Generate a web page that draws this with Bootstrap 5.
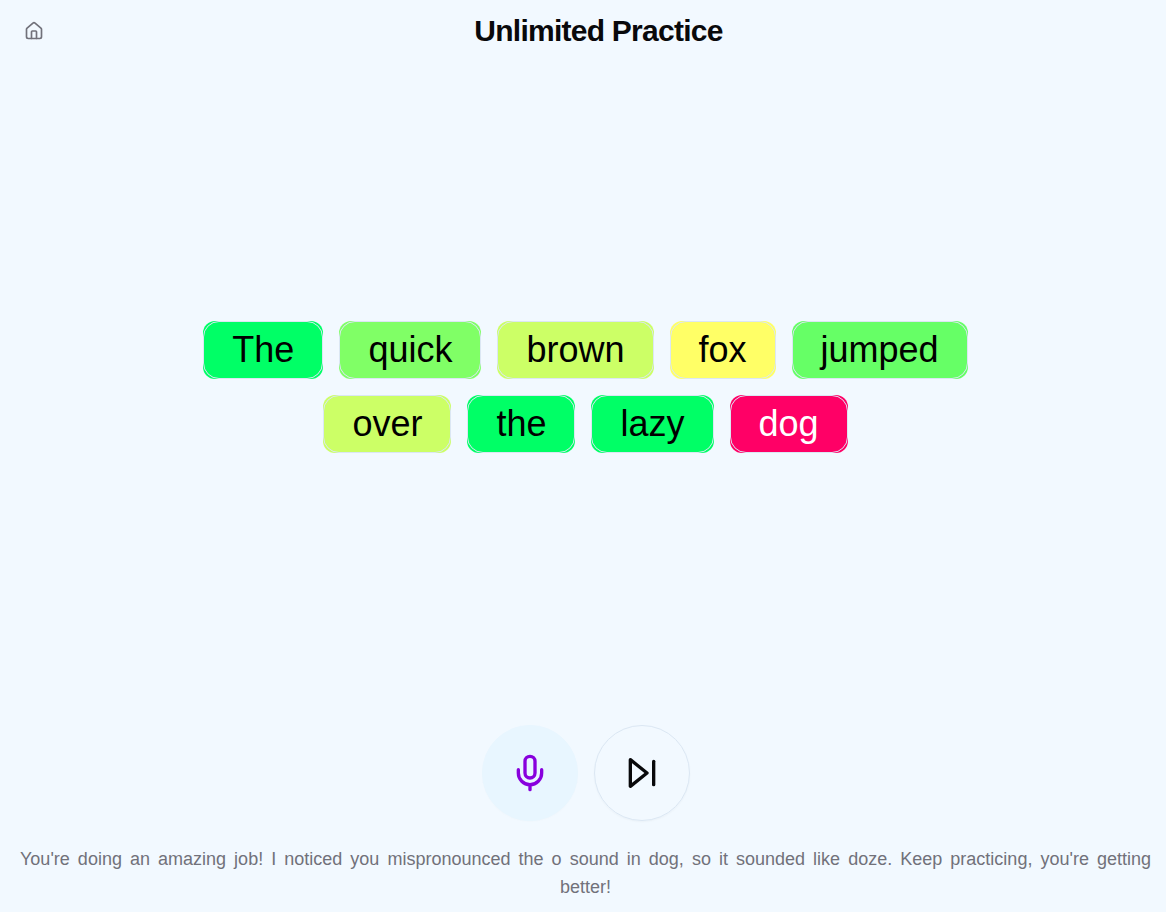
<!DOCTYPE html>
<html lang="en">
<head>
<meta charset="utf-8">
<meta name="viewport" content="width=device-width, initial-scale=1">
<title>Unlimited Practice</title>
<link href="https://cdn.jsdelivr.net/npm/bootstrap@5.3.0/dist/css/bootstrap.min.css" rel="stylesheet">
<style>
body { background: #f2f9ff; color: #09090b; font-family: "Liberation Sans", Arial, sans-serif; }
.page-header { height: 62px; padding: 0 17px 0 20px; }
.home-link { width: 28px; height: 28px; color: #71717a; }
.page-title { font-size: 30px; line-height: 36px; letter-spacing: -.75px; }
.page-main { padding: 0 15px 11px 20px; }
.sentence-area { padding-bottom: 13px; }
.sentence { max-width: 800px; gap: 16px; }
.word { border-radius: 12px; color: #000; }
.word-face { border: 1px solid #dbe7f3; border-radius: 16px; padding: 8px 28px; font-size: 36px; line-height: 40px; }
.round-btn { width: 96px; height: 96px; border: 1px solid #dbe7f3; color: #09090b; box-shadow: 0 1px 2px rgba(0,0,0,.03); }
.round-btn.mic { background: #e8f6ff; border-color: #e8f6ff; color: #8800dd; box-shadow: 0 1px 2px rgba(0,0,0,.01); }
.feedback { font-size: 18px; line-height: 28px; color: #71717a; text-align: center; margin-top: 24px; }
.feedback-line { display: block; text-align: justify; text-align-last: justify; }
</style>
</head>
<body class="vh-100 d-flex flex-column overflow-hidden">
<header class="page-header d-flex align-items-center flex-shrink-0">
  <a href="#" class="home-link d-flex align-items-center justify-content-center" aria-label="Home">
    <svg width="20" height="20" viewBox="0 0 24 24" fill="none" stroke="currentColor" stroke-width="2" stroke-linecap="round" stroke-linejoin="round"><path d="M15 21v-8a1 1 0 0 0-1-1h-4a1 1 0 0 0-1 1v8"/><path d="M3 10a2 2 0 0 1 .709-1.528l7-5.999a2 2 0 0 1 2.582 0l7 5.999A2 2 0 0 1 21 10v9a2 2 0 0 1-2 2H5a2 2 0 0 1-2-2z"/></svg>
  </a>
  <h1 class="page-title flex-grow-1 text-center fw-bold mb-0">Unlimited Practice</h1>
</header>
<main class="page-main flex-grow-1 d-flex flex-column align-items-center">
  <div class="sentence-area flex-grow-1 d-flex align-items-center">
    <div class="sentence d-flex flex-wrap justify-content-center">
      <div class="word" style="background:#00ff66"><div class="word-face">The</div></div>
      <div class="word" style="background:#80ff66"><div class="word-face">quick</div></div>
      <div class="word" style="background:#ccff66"><div class="word-face">brown</div></div>
      <div class="word" style="background:#ffff66"><div class="word-face">fox</div></div>
      <div class="word" style="background:#66ff66"><div class="word-face">jumped</div></div>
      <div class="word" style="background:#ccff66"><div class="word-face">over</div></div>
      <div class="word" style="background:#00ff66"><div class="word-face">the</div></div>
      <div class="word" style="background:#00ff66"><div class="word-face">lazy</div></div>
      <div class="word text-white" style="background:#ff0066"><div class="word-face">dog</div></div>
    </div>
  </div>
  <div class="d-flex gap-3">
    <button type="button" class="btn round-btn mic rounded-circle d-flex align-items-center justify-content-center p-0" aria-label="Record">
      <svg width="40" height="40" viewBox="0 0 24 24" fill="none" stroke="currentColor" stroke-width="2" stroke-linecap="round" stroke-linejoin="round"><path d="M12 2a3 3 0 0 0-3 3v7a3 3 0 0 0 6 0V5a3 3 0 0 0-3-3Z"/><path d="M19 10v2a7 7 0 0 1-14 0v-2"/><path d="M12 19v3"/></svg>
    </button>
    <button type="button" class="btn round-btn rounded-circle d-flex align-items-center justify-content-center p-0" aria-label="Next">
      <svg width="40" height="40" viewBox="0 0 24 24" fill="none" stroke="currentColor" stroke-width="2" stroke-linecap="round" stroke-linejoin="round"><path d="M5 4l10 8-10 8z"/><path d="M19 5v14"/></svg>
    </button>
  </div>
  <p class="feedback w-100 mb-0"><span class="feedback-line">You're doing an amazing job! I noticed you mispronounced the o sound in dog, so it sounded like doze. Keep practicing, you're getting</span> better!</p>
</main>
<script src="https://cdn.jsdelivr.net/npm/bootstrap@5.3.0/dist/js/bootstrap.bundle.min.js"></script>
</body>
</html>
